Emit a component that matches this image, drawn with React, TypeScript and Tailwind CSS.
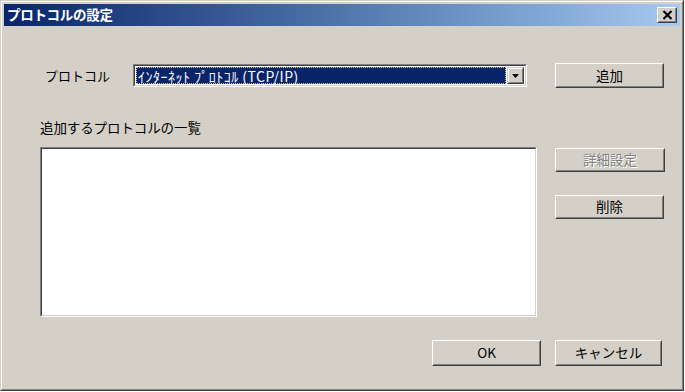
import React from "react";

const font = { fontFamily: '"Noto Sans CJK JP", "Noto Sans", sans-serif' };

// classic raised 3D button
function Btn({ label, disabled = false, className = "" }: { label: string; disabled?: boolean; className?: string }) {
  return (
    <div
      className={`border border-t-white border-l-white border-b-[#404040] border-r-[#404040] bg-[#d4d0c8] ${className}`}
    >
      <div className="w-full h-full border border-t-[#d4d0c8] border-l-[#d4d0c8] border-b-[#808080] border-r-[#808080] flex items-center justify-center">
        {disabled ? (
          <span className="text-[13.5px] leading-none text-[#808080] [text-shadow:1px_1px_0_#ffffff]">{label}</span>
        ) : (
          <span className="text-[13.5px] leading-none text-black">{label}</span>
        )}
      </div>
    </div>
  );
}

export default function App() {
  return (
    <div className="w-[685px] h-[392px] bg-white" style={font}>
      <div className="w-[684px] h-[391px] border border-t-[#d4d0c8] border-l-[#d4d0c8] border-b-[#404040] border-r-[#404040] bg-[#d4d0c8]">
        <div className="w-full h-full border border-t-white border-l-white border-b-[#808080] border-r-[#808080] p-[2px] flex flex-col">
          {/* Title bar */}
          <div className="h-[22px] flex items-center justify-between bg-gradient-to-r from-[#0a246a] to-[#a6caf0] pl-[3px] pr-[3px]">
            <span className="text-white font-bold text-[13.5px] leading-none tracking-[-0.3px]">プロトコルの設定</span>
            <div className="w-[20px] h-[16px] border border-t-white border-l-white border-b-[#404040] border-r-[#404040] bg-[#d4d0c8]">
              <div className="w-full h-full border border-t-[#d4d0c8] border-l-[#d4d0c8] border-b-[#808080] border-r-[#808080] flex items-center justify-center">
                <svg width="11" height="10" viewBox="0 0 11 10">
                  <path d="M1.5 1 L9.5 9 M9.5 1 L1.5 9" stroke="#000" strokeWidth="2.2" />
                </svg>
              </div>
            </div>
          </div>

          {/* Body */}
          <div className="pt-[37px] pl-[36px] flex flex-col">
            <div className="flex items-center h-[25px]">
              <span className="w-[93px] pl-[5px] text-[13px] leading-none text-black">プロトコル</span>
              <div className="w-[394px] h-[23px] border border-t-[#808080] border-l-[#808080] border-b-white border-r-white">
                <div className="w-full h-full border border-t-[#404040] border-l-[#404040] border-b-[#d4d0c8] border-r-[#d4d0c8] bg-white flex items-stretch p-[1px]">
                  <div className="flex-1 bg-[#0a246a] border border-dotted border-[#d8c880] flex items-center pl-[1px] mr-[1px]">
                    <span className="text-white text-[14px] leading-none whitespace-pre tracking-[0.5px]">ｲﾝﾀｰﾈｯﾄ ﾌﾟﾛﾄｺﾙ (TCP/IP)</span>
                  </div>
                  <div className="w-[17px] border border-t-[#d4d0c8] border-l-[#d4d0c8] border-b-[#404040] border-r-[#404040] bg-[#d4d0c8]">
                    <div className="w-full h-full border border-t-white border-l-white border-b-[#808080] border-r-[#808080] flex items-center justify-center">
                      <svg width="7" height="4" viewBox="0 0 7 4">
                        <path d="M0 0 H7 L3.5 4 Z" fill="#000" />
                      </svg>
                    </div>
                  </div>
                </div>
              </div>
              <Btn label="追加" className="ml-[28px] w-[109px] h-[25px]" />
            </div>

            <div className="mt-[32px] h-[16px] flex items-center">
              <span className="text-[13.5px] leading-none text-black tracking-[-0.1px]">追加するプロトコルの一覧</span>
            </div>

            <div className="mt-[11px] flex">
              <div className="w-[497px] h-[170px] border border-t-[#808080] border-l-[#808080] border-b-white border-r-white">
                <div className="w-full h-full border border-t-[#404040] border-l-[#404040] border-b-[#d4d0c8] border-r-[#d4d0c8] bg-white" />
              </div>
              <div className="ml-[18px] pt-[1px] flex flex-col gap-[23px]">
                <Btn label="詳細設定" disabled className="w-[110px] h-[24px]" />
                <Btn label="削除" className="w-[109px] h-[24px]" />
              </div>
            </div>

            <div className="mt-[23px] flex">
              <Btn label="OK" className="ml-[392px] w-[109px] h-[26px]" />
              <Btn label="キャンセル" className="ml-[14px] w-[107px] h-[26px]" />
            </div>
          </div>
        </div>
      </div>
    </div>
  );
}
